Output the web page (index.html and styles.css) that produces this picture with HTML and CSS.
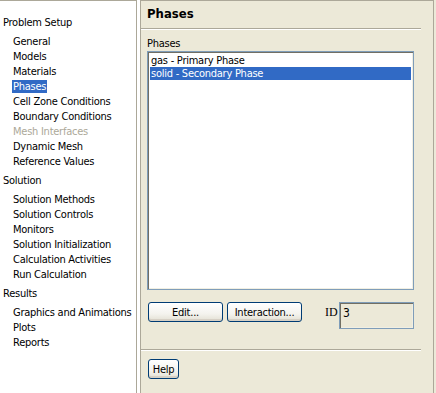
FILE: index.html
```html
<!DOCTYPE html>
<html>
<head>
<meta charset="utf-8">
<link rel="stylesheet" href="styles.css">
</head>
<body>
<div class="app">
  <nav class="tree">
    <div class="group">Problem Setup</div>
    <div class="item">General</div>
    <div class="item">Models</div>
    <div class="item">Materials</div>
    <div class="item"><span class="sel">Phases</span></div>
    <div class="item">Cell Zone Conditions</div>
    <div class="item">Boundary Conditions</div>
    <div class="item disabled">Mesh Interfaces</div>
    <div class="item">Dynamic Mesh</div>
    <div class="item">Reference Values</div>
    <div class="group">Solution</div>
    <div class="item">Solution Methods</div>
    <div class="item">Solution Controls</div>
    <div class="item">Monitors</div>
    <div class="item">Solution Initialization</div>
    <div class="item">Calculation Activities</div>
    <div class="item">Run Calculation</div>
    <div class="group">Results</div>
    <div class="item">Graphics and Animations</div>
    <div class="item">Plots</div>
    <div class="item">Reports</div>
  </nav>
  <div class="gap"></div>
  <section class="panel">
    <h1 class="title">Phases</h1>
    <div class="sep"></div>
    <div class="body">
      <div class="label">Phases</div>
      <div class="listbox">
        <div class="row">gas - Primary Phase</div>
        <div class="row selected">solid - Secondary Phase</div>
      </div>
      <div class="actions">
        <button class="btn btn-edit">Edit...</button>
        <button class="btn btn-inter">Interaction...</button>
        <span class="id-label">ID</span>
        <div class="id-field">3</div>
      </div>
    </div>
    <div class="sep sep-bottom"></div>
    <div class="footer">
      <button class="btn btn-help">Help</button>
    </div>
  </section>
</div>
</body>
</html>
```

FILE: styles.css
```css
* { box-sizing: border-box; }
html, body {
  margin: 0;
  padding: 0;
}
body {
  width: 436px;
  height: 393px;
  overflow: hidden;
  background: #ece9d8;
  font-family: "DejaVu Sans Condensed", "Liberation Sans", sans-serif;
  font-size: 11px;
  letter-spacing: -0.25px;
  color: #000;
}
.app {
  display: flex;
  height: 393px;
}
.tree {
  width: 137px;
  flex: none;
  background: #fff;
  border-top: 1px solid #aca899;
  border-right: 1px solid #aca899;
  padding-top: 10px;
}
.gap {
  width: 3px;
  flex: none;
  background: #fff;
}
.group {
  line-height: 15px;
  height: 15px;
  padding-left: 3px;
  margin: 4px 0;
  white-space: nowrap;
}
.item {
  line-height: 15px;
  height: 15px;
  padding-left: 13px;
  white-space: nowrap;
}
.item.disabled { color: #aca899; }
.sel {
  background: #316ac5;
  color: #fff;
  display: inline-block;
  line-height: 13px;
  padding: 0 1px;
  margin-left: -1px;
}
.panel {
  width: 294px;
  flex: none;
  border-top: 1px solid #aca899;
  border-left: 1px solid #aca899;
  border-right: 1px solid #aca899;
  display: flex;
  flex-direction: column;
}
.title {
  margin: 0;
  height: 27px;
  padding: 5px 0 0 6px;
  font-size: 13px;
  font-weight: bold;
  letter-spacing: 0;
  line-height: 16px;
}
.sep {
  width: 280px;
  height: 2px;
  border-top: 1px solid #aca899;
  border-bottom: 1px solid #fff;
}
.body {
  padding: 6px 0 0 6px;
}
.label {
  line-height: 15px;
  height: 15px;
}
.listbox {
  width: 267px;
  height: 239px;
  border: 1px solid #7f9db9;
  background: #fff;
  box-shadow: inset 1px 1px 0 #716f64, inset -1px -1px 0 #f1efe2;
  padding: 2px 2px 0 2px;
}
.row {
  height: 13px;
  line-height: 13px;
  padding-left: 1px;
  white-space: nowrap;
}
.row.selected {
  background: #316ac5;
  color: #fff;
}
.actions {
  display: flex;
  align-items: flex-start;
  margin-top: 12px;
  height: 27px;
}
.btn {
  font-family: inherit;
  font-size: 11px;
  letter-spacing: -0.25px;
  height: 20px;
  padding: 0;
  border: 1px solid #003c74;
  border-radius: 3px;
  background: linear-gradient(#ffffff 0%, #f4f3ee 60%, #e3e0d3 100%);
  box-shadow: inset 0 -2px 0 #d6d0c5, inset 0 1px 0 #fff;
  color: #000;
}
.btn-edit { width: 75px; margin-left: 1px; }
.btn-inter { width: 75px; margin-left: 4px; }
.id-label {
  font-family: "Liberation Serif", serif;
  font-size: 12px;
  letter-spacing: 0;
  margin-left: 23px;
  margin-top: 3px;
  width: 14px;
}
.id-field {
  width: 75px;
  height: 27px;
  border: 1px solid #7f9db9;
  box-shadow: inset 1px 1px 0 #716f64, inset -1px -1px 0 #f1efe2;
  padding: 3px 0 0 3px;
  font-size: 12px;
  line-height: 15px;
}
.sep-bottom {
  margin-top: 20px;
}
.footer {
  padding: 8px 0 0 7px;
}
.btn-help { width: 31px; }
```
